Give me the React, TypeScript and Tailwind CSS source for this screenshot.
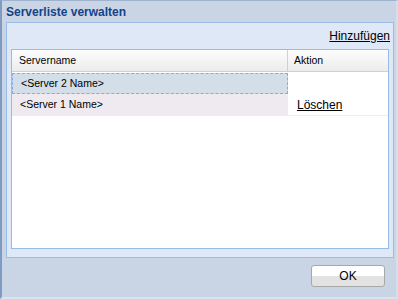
import React from 'react';

const font = { fontFamily: '"Liberation Sans", Arial, sans-serif' };

const App: React.FC = () => (
    <div className="w-[398px] h-[299px] bg-[#c9d5e4] border-l-2 border-t border-r-2 border-b-2 border-l-[#7f9bc2] border-t-[#9fb3cf] border-r-[#d5dfeb] border-b-[#dbe3ee] flex flex-col" style={font}>
        {/* Titel */}
        <div className="h-[21px] flex items-center pl-[4px] text-[12px] font-bold text-[#15428b]">Serverliste verwalten</div>
        {/* Inhalt */}
        <div className="ml-[4px] mr-[2px] h-[236px] border border-[#99bbe8] bg-[#dfe8f6] flex flex-col px-[4px]">
            <div className="h-[26px] flex items-end justify-end pb-[7px]">
                <span className="text-[12px] text-black underline leading-none -mr-[1px]">Hinzufügen</span>
            </div>
            <div className="h-[200px] border border-[#99bbe8] bg-white text-[10.5px] text-black">
                <div className="flex h-[22px] bg-gradient-to-b from-[#fdfdfd] to-[#ececec] border-b border-[#d0d0d0]">
                    <div className="w-[276px] pl-[7px] flex items-center border-r border-[#d0d0d0]">Servername</div>
                    <div className="flex-1 pl-[6px] flex items-center">Aktion</div>
                </div>
                <div className="flex h-[21px] mt-px">
                    <div className="w-[276px] pl-[8px] flex items-center bg-[#d3dee9] border border-dashed border-[#8ea9e2]">&lt;Server 2 Name&gt;</div>
                    <div className="flex-1" />
                </div>
                <div className="flex h-[22px] border-b border-[#ececec]">
                    <div className="w-[276px] pl-[8px] flex items-center bg-[#efe9f0]">&lt;Server 1 Name&gt;</div>
                    <div className="flex-1 pl-[9px] flex items-center text-[12px] underline">Löschen</div>
                </div>
            </div>
        </div>
        {/* Schaltflächen */}
        <div className="flex-1 flex justify-end items-start pt-[7px] pr-[11px]">
            <button className="w-[74px] h-[22px] rounded-[3px] border border-[#a8a8a8] bg-gradient-to-b from-white from-50% to-[#e2e2e2] to-50% text-[12px] text-black">OK</button>
        </div>
    </div>
);

export default App;
